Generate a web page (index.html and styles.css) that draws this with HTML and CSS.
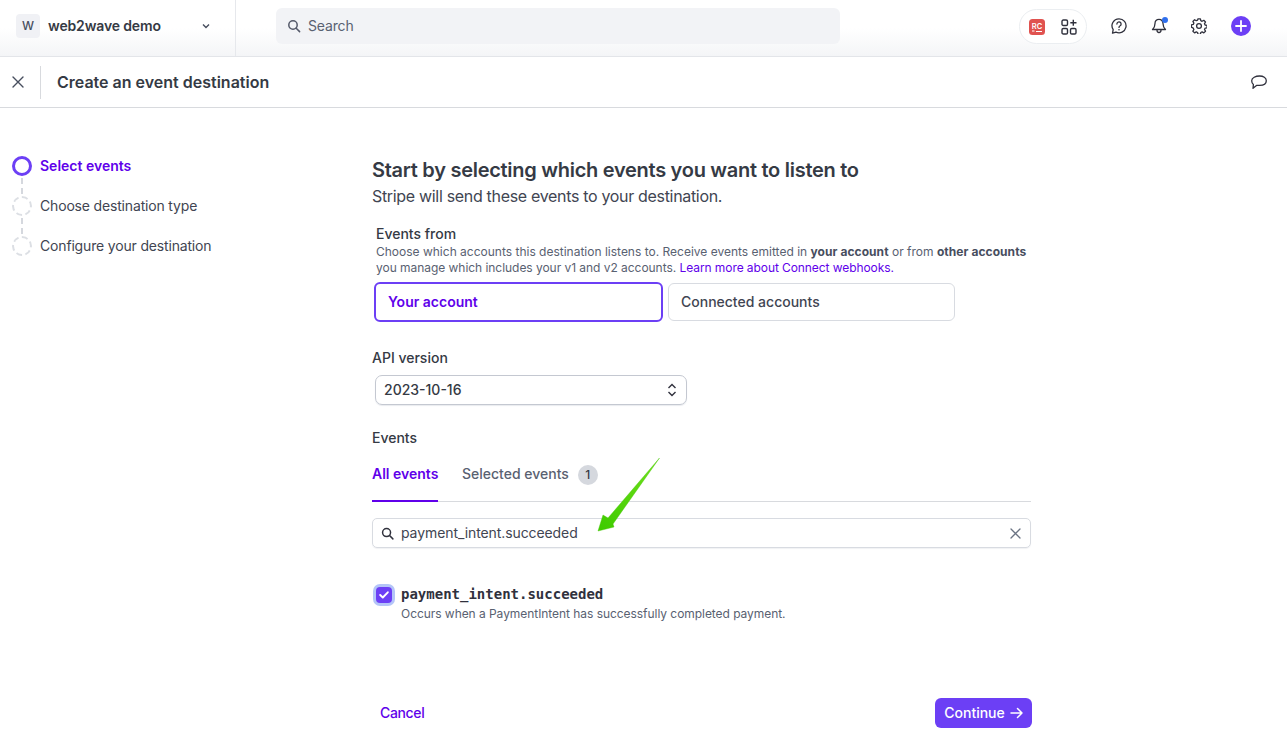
FILE: index.html
```html
<!DOCTYPE html>
<html lang="en">
<head>
<meta charset="utf-8">
<title>Create an event destination</title>
<link rel="stylesheet" href="styles.css">
</head>
<body>
<header class="topbar">
  <div class="account">
    <span class="avatar">W</span>
    <span class="account-name">web2wave demo</span>
    <svg class="chev" width="10" height="10" viewBox="0 0 10 10"><path d="M2 3.500 5 6.500 8 3.500" fill="none" stroke="#474e5e" stroke-width="1.400"/></svg>
  </div>
  <div class="search-wrap">
    <div class="search">
      <svg width="14" height="14" viewBox="0 0 14 14"><circle cx="6" cy="6" r="4.200" fill="none" stroke="#545969" stroke-width="1.500"/><path d="M9.200 9.200 12.600 12.600" stroke="#545969" stroke-width="1.500" stroke-linecap="round"/></svg>
      <span>Search</span>
    </div>
  </div>
  <div class="tools">
    <div class="pill">
      <svg width="16" height="16" viewBox="0 0 16 16"><rect width="16" height="16" rx="3.500" fill="#e0524f"/><text x="8" y="9.600" font-family="Inter" font-size="7.500" font-weight="600" fill="#fff" text-anchor="middle">RC</text><path d="M3 12h2.500M7 12.500h6" stroke="#fff" stroke-width="1"/></svg>
      <svg width="16" height="16" viewBox="0 0 16 16" fill="none" stroke="#30313d" stroke-width="1.400"><rect x="1" y="1" width="5.500" height="5.500" rx="1.300"/><rect x="1" y="9.500" width="5.500" height="5.500" rx="1.300"/><rect x="9.500" y="9.500" width="5.500" height="5.500" rx="1.300"/><path d="M12.300 .8v6M9.300 3.800h6.200"/></svg>
    </div>
    <svg class="tool" width="16" height="16" viewBox="0 0 16 16" fill="none" stroke="#30313d" stroke-width="1.300"><path d="M8 .8a7 7 0 1 1-3 13.300L1.500 15.200l.7-3.500A7 7 0 0 1 8 .8Z" stroke-linejoin="round"/><path d="M5.900 6a2.100 2.100 0 1 1 3.200 1.800c-.7.400-1.100.8-1.100 1.600" stroke-linecap="round"/><circle cx="8" cy="11.700" r=".8" fill="#30313d" stroke="none"/></svg>
    <div class="bell">
      <svg width="16" height="16" viewBox="0 0 16 16" fill="none" stroke="#30313d" stroke-width="1.300" stroke-linejoin="round"><path d="M8 1.300c-2.500 0-4 1.900-4 4.200 0 3.200-1 4.600-2.500 6h13c-1.500-1.400-2.500-2.800-2.500-6 0-2.300-1.500-4.200-4-4.200Z"/><path d="M6 12c0 1.500.8 2.500 2 2.500s2-1 2-2.500"/></svg>
      <span class="dot"></span>
    </div>
    <svg class="tool" width="16" height="16" viewBox="0 0 16 16" fill="none" stroke="#30313d" stroke-width="1.300" stroke-linejoin="round"><path d="M6.800 1h2.400l.4 1.900 1.300.6 1.700-1 1.700 1.700-1 1.700.6 1.300 1.900.4v2.400l-1.900.4-.6 1.300 1 1.700-1.700 1.700-1.700-1-1.300.6-.4 1.900H6.800l-.4-1.900-1.300-.6-1.700 1-1.700-1.700 1-1.700-.6-1.300L.2 9.400V7l1.900-.4.600-1.300-1-1.700 1.700-1.700 1.700 1 1.300-.6Z" transform="translate(.2 -.2)"/><circle cx="8" cy="8" r="2.400"/></svg>
    <span class="plus">
      <svg width="12" height="12" viewBox="0 0 12 12"><path d="M6 1v10M1 6h10" stroke="#fff" stroke-width="1.800" stroke-linecap="round"/></svg>
    </span>
  </div>
</header>

<div class="subbar">
  <button class="close" aria-label="Close">
    <svg width="12" height="12" viewBox="0 0 12 12"><path d="M1 1 11 11M11 1 1 11" stroke="#474e5e" stroke-width="1.400" stroke-linecap="round"/></svg>
  </button>
  <h1>Create an event destination</h1>
  <svg class="feedback" width="16" height="16" viewBox="0 0 16 16" fill="none" stroke="#30313d" stroke-width="1.300" stroke-linejoin="round"><path d="M8.500 2C12.300 2 15.300 3.800 15.300 6.800S12.300 11.400 8.500 11.400H5.500L2 14.300l.4-3.700C1.300 9.700.7 8.400.7 6.800.7 3.800 4.700 2 8.500 2Z"/></svg>
</div>

<main class="layout">
  <nav class="steps">
    <div class="step active"><span class="ring"></span><span>Select events</span></div>
    <div class="step"><span class="ring"></span><span>Choose destination type</span></div>
    <div class="step"><span class="ring"></span><span>Configure your destination</span></div>
  </nav>

  <section class="content">
    <h2>Start by selecting which events you want to listen to</h2>
    <p class="lead">Stripe will send these events to your destination.</p>

    <div class="from">
      <h3>Events from</h3>
      <p class="hint">Choose which accounts this destination listens to. Receive events emitted in <b>your account</b> or from <b>other accounts</b> <span class="tight">you manage which includes your v1 and v2 accounts.</span> <a href="#">Learn more about Connect webhooks.</a></p>
      <div class="choices">
        <div class="choice selected">Your account</div>
        <div class="choice">Connected accounts</div>
      </div>
    </div>

    <div class="api">
      <h3>API version</h3>
      <div class="select">
        <span>2023-10-16</span>
        <svg width="10" height="14" viewBox="0 0 10 14" fill="none" stroke="#30313d" stroke-width="1.400"><path d="M1.500 5 5 1.500 8.500 5M1.500 9 5 12.500 8.500 9"/></svg>
      </div>
    </div>

    <h3 class="events-title">Events</h3>
    <div class="tabs">
      <div class="tab current">All events</div>
      <div class="tab">Selected events <span class="count">1</span></div>
    </div>

    <div class="filter">
      <svg width="13" height="13" viewBox="0 0 14 14"><circle cx="6" cy="6" r="4.300" fill="none" stroke="#30313d" stroke-width="1.600"/><path d="M9.200 9.200 12.800 12.800" stroke="#30313d" stroke-width="1.600" stroke-linecap="round"/></svg>
      <span class="filter-text">payment_intent.succeeded</span>
      <svg width="11" height="11" viewBox="0 0 11 11"><path d="M1 1 10 10M10 1 1 10" stroke="#6a7383" stroke-width="1.300" stroke-linecap="round"/></svg>
    </div>

    <div class="event">
      <span class="check"><svg width="10" height="8" viewBox="0 0 10 8"><path d="M1.200 4 3.800 6.500 8.800 1.300" fill="none" stroke="#fff" stroke-width="1.900" stroke-linecap="round" stroke-linejoin="round"/></svg></span>
      <div>
        <div class="event-name">payment_intent.succeeded</div>
        <div class="event-desc">Occurs when a PaymentIntent has successfully completed payment.</div>
      </div>
    </div>

    <footer class="actions">
      <a class="cancel" href="#">Cancel</a>
      <button class="continue">Continue <svg width="13" height="12" viewBox="0 0 13 12" fill="none" stroke="#fff" stroke-width="1.500" stroke-linecap="round" stroke-linejoin="round"><path d="M1 6h11M7.500 1.500 12 6 7.500 10.500"/></svg></button>
    </footer>
  </section>
</main>

<svg class="annotation" width="70" height="84" viewBox="0 0 70 84"><defs><linearGradient id="arrow-fill" x1="0.900" y1="0" x2="0.100" y2="1"><stop offset="0" stop-color="#6fe01a"/><stop offset="1" stop-color="#3fcb00"/></linearGradient></defs><path d="M64.500 1 18 67 19 70 3 74 8 58 13 61Z" fill="url(#arrow-fill)" stroke="#42c400" stroke-width=".4" stroke-linejoin="round"/></svg>
</body>
</html>
```
FILE: styles.css
```css
* { box-sizing: border-box; }
html, body { margin: 0; height: 100%; }
body {
  position: relative;
  overflow: hidden;
  background: #fff;
  color: #30313d;
  font-family: Inter, "Liberation Sans", sans-serif;
  font-size: 14px;
  line-height: 20px;
}
h1, h2, h3, p { margin: 0; }
a { color: #625afa; text-decoration: none; }

.topbar {
  height: 57px;
  display: flex;
  background: linear-gradient(#fff 50%, #f4f5f7);
  border-bottom: 1px solid #e3e5e9;
}
.account {
  width: 236px;
  height: 56px;
  flex: none;
  display: flex;
  align-items: center;
  padding: 0 24px 4px 16px;
  border-right: 1px solid #e6e8ec;
}
.avatar {
  width: 24px;
  height: 24px;
  display: flex;
  align-items: center;
  justify-content: center;
  background: #f0f1f5;
  border-radius: 4px;
  font-size: 12px;
  font-weight: 500;
  color: #474e5e;
}
.account-name { margin-left: 8px; flex: 1; font-size: 14px; letter-spacing: -0.15px; font-weight: 600; color: #353a44; }
.chev { flex: none; }
.search-wrap { flex: 1; padding: 8px 0 0 40px; }
.search {
  width: 564px;
  height: 36px;
  display: flex;
  align-items: center;
  gap: 7px;
  padding-left: 11px;
  background: #f2f3f6;
  border-radius: 6px;
  color: #596171;
  font-size: 14px;
  letter-spacing: -0.15px;
}
.tools { display: flex; align-items: flex-start; padding: 9px 36px 0 0; }
.pill {
  width: 68px;
  height: 35px;
  display: flex;
  align-items: center;
  justify-content: center;
  gap: 16px;
  background: #fff;
  border: 1px solid #ebeef1;
  border-radius: 18px;
}
.tool { margin-top: 9px; }
.pill + .tool { margin-left: 24px; }
.bell { position: relative; height: 16px; margin: 9px 24px 0; }
.bell svg { display: block; }
.dot {
  position: absolute;
  top: -1px;
  right: -1px;
  width: 6px;
  height: 6px;
  border-radius: 50%;
  background: #2f6fed;
}
.plus {
  width: 20px;
  height: 20px;
  margin: 7px 0 0 24px;
  display: flex;
  align-items: center;
  justify-content: center;
  border-radius: 50%;
  background: #6c3ff5;
}

.subbar {
  height: 51px;
  display: flex;
  align-items: center;
  padding: 0 20px 0 0;
  border-bottom: 1px solid #d8dade;
}
.close {
  width: 41px;
  height: 33px;
  padding: 0 0 0 12px;
  display: flex;
  align-items: center;
  background: none;
  border: 0;
  border-right: 1px solid #d8dade;
}
.subbar h1 { flex: 1; margin-left: 16px; font-size: 16px; line-height: 24px; font-weight: 600; color: #353a44; }

.layout { display: flex; padding-top: 48px; }
.steps { width: 372px; flex: none; padding: 0 0 0 12px; }
.step {
  position: relative;
  height: 40px;
  display: flex;
  align-items: flex-start;
  gap: 8px;
  font-size: 14px;
  line-height: 20px;
  letter-spacing: -0.17px;
  color: #414552;
}
.ring {
  width: 20px;
  height: 20px;
  flex: none;
  border: 2px dashed #dcdfe4;
  border-radius: 50%;
}
.step:not(:last-child)::after {
  content: "";
  position: absolute;
  left: 9px;
  top: 22px;
  height: 16px;
  border-left: 2px dashed #d5d8de;
}
.step.active { color: #6000ea; font-weight: 600; letter-spacing: 0; }
.step.active .ring { border: 3px solid #6c3ff5; }

.content { width: 659px; flex: none; }
h2 { font-size: 20px; line-height: 28px; font-weight: 600; letter-spacing: -0.28px; color: #353a44; }
.lead { font-size: 16px; line-height: 24px; letter-spacing: -0.32px; color: #414552; }

.from { margin-top: 16px; }
.from h3 { margin-left: 4px; }
h3 { font-size: 14px; line-height: 20px; font-weight: 500; color: #353a44; }
.hint { margin: 0 0 0 4px; font-size: 12px; line-height: 16px; color: #596171; }
.hint b { font-weight: 700; color: #474e5e; letter-spacing: 0.06px; }
.hint .tight { letter-spacing: -0.04px; }
.hint a { color: #6000ea; letter-spacing: -0.08px; }
.choices { display: flex; gap: 5px; align-items: center; margin: 6px 0 0 2px; }
.choice {
  width: 287px;
  height: 38px;
  display: flex;
  align-items: center;
  padding-left: 12px;
  border: 1px solid #d8dbe1;
  border-radius: 6px;
  font-weight: 500;
  color: #414552;
}
.choice.selected {
  width: 289px;
  height: 40px;
  border: 2px solid #6c3ff5;
  color: #6000ea;
  font-weight: 600;
  padding-left: 12px;
}

.api { margin-top: 26px; }
.select {
  width: 312px;
  height: 30px;
  margin: 7px 0 0 3px;
  display: flex;
  align-items: center;
  justify-content: space-between;
  padding: 0 9px 0 8px;
  border: 1px solid #c4c8d1;
  border-radius: 7px;
  font-weight: 500;
  color: #353a44;
  box-shadow: 0 1px 1px #e9ebef;
}
.events-title { margin-top: 23px; }
.tabs {
  display: flex;
  gap: 24px;
  height: 46px;
  margin-top: 8px;
  border-bottom: 1px solid #d8dade;
}
.tab {
  height: 46px;
  padding-top: 8px;
  font-weight: 500;
  color: #596171;
  white-space: nowrap;
}
.tab.current {
  width: 66px;
  color: #6000ea;
  font-weight: 600;
  border-bottom: 2px solid #6000ea;
}
.count {
  display: inline-flex;
  width: 20px;
  height: 20px;
  margin-left: 5px;
  align-items: center;
  justify-content: center;
  border-radius: 50%;
  background: #d5d8de;
  font-size: 12px;
  color: #353a44;
}
.filter {
  height: 30px;
  margin-top: 16px;
  display: flex;
  align-items: center;
  gap: 7px;
  padding: 0 9px 0 8px;
  border: 1px solid #d8dbe1;
  border-radius: 5px;
  box-shadow: 0 1px 1px #f1f2f4;
}
.filter-text { flex: 1; color: #414552; letter-spacing: -0.09px; }

.event { display: flex; gap: 5px; margin: 36px 0 0 4px; }
.check {
  width: 16px;
  height: 16px;
  margin-top: 3px;
  flex: none;
  display: flex;
  align-items: center;
  justify-content: center;
  background: #6c3ff5;
  border-radius: 4px;
  box-shadow: 0 0 0 3px #b4c5f8;
}
.event-name {
  margin-left: 4px;
  font-family: "DejaVu Sans Mono", "Liberation Mono", monospace;
  font-size: 14px;
  font-weight: 700;
  color: #30313d;
}
.event-desc { margin-left: 4px; font-size: 12px; line-height: 20px; letter-spacing: -0.05px; color: #596171; }

.actions {
  display: flex;
  align-items: center;
  justify-content: space-between;
  margin-top: 74px;
  padding-left: 8px;
  margin-right: -1px;
}
.cancel { color: #6000ea; font-weight: 500; letter-spacing: -0.35px; }
.continue {
  width: 97px;
  height: 30px;
  display: flex;
  align-items: center;
  justify-content: center;
  gap: 5px;
  padding: 0 0 1px;
  border: 0;
  border-radius: 6px;
  background: #6c3ff5;
  color: #fff;
  font-family: inherit;
  font-size: 14px;
  font-weight: 500;
}

.annotation { position: absolute; left: 595px; top: 457px; }
```
